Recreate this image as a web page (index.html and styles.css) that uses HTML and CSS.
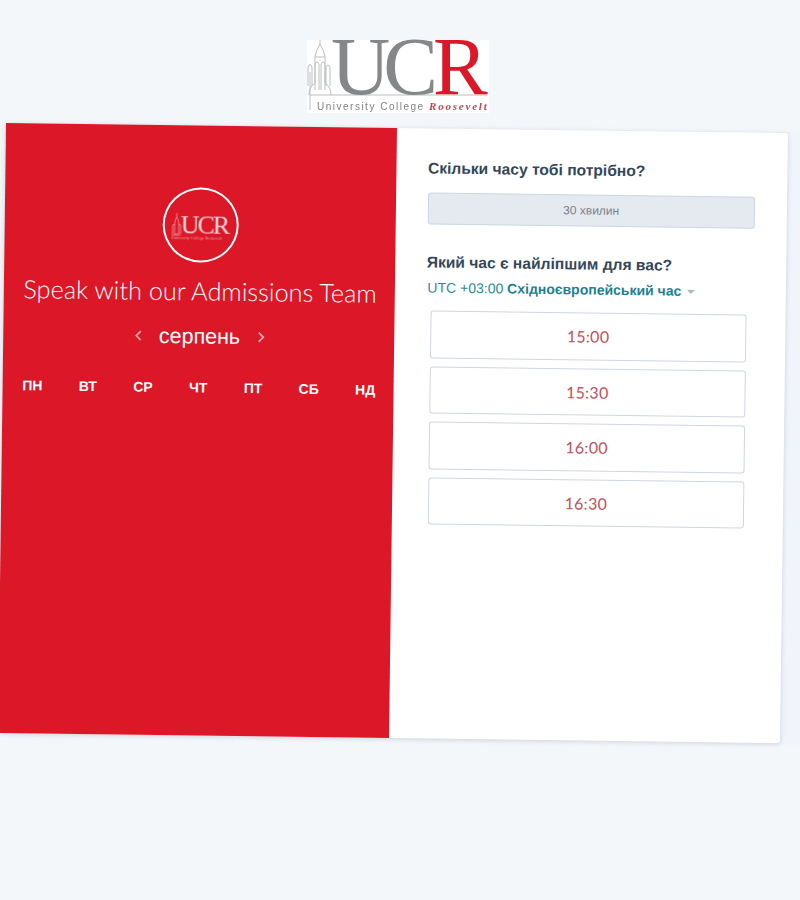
FILE: index.html
```html
<!DOCTYPE html>
<html lang="uk">
<head>
    <meta charset="UTF-8">
    <meta name="viewport" content="width=device-width, initial-scale=1.0">
    <title>Speak with our Admissions Team</title>
    <link rel="stylesheet" href="styles.css">
</head>
<body>
    <div class="logo-row">
        <svg class="logo" width="182" height="100" viewBox="0 -27 182 100">
            <rect width="182" height="73" fill="#fff"/>
            <g fill="none" stroke="#bcbec0" stroke-width="1">
                <path d="M3 70V32M13 4V0M13 4q-4 6-5 13v26M13 4q4 6 5 13v26M8 17h10"/>
                <path d="M1 46V27q2-5 4 0v19M8 50V24q2-4 4 0v26M14 50V24q2-4 4 0v26M19 46V27q2-4 4 0v19"/>
                <path d="M8 43q-6 4-6 12M18 43q6 4 6 12"/>
                <path d="M3 55H180"/>
            </g>
            <text class="logo-uc" x="24" y="54">UC</text>
            <text class="logo-r" x="126" y="54">R</text>
            <text class="logo-name" x="10" y="70">University College</text>
            <text class="logo-place" x="122" y="70">Roosevelt</text>
        </svg>
    </div>

    <div class="card">
        <div class="side">
            <div class="badge">
                <svg width="60" height="31" viewBox="0 -3 60 31">
                    <g fill="none" stroke="#f09ca4" stroke-width="0.8">
                        <path d="M6 1v4M6 5q-2 3-2 6v11h4V11q0-3-2-6M2 22v-9q1-2 2 0M8 13q1-2 2 0v9M1 23h9"/>
                    </g>
                    <text class="badge-text" x="10" y="21">UCR</text>
                    <text class="badge-sub" x="1" y="27">University College Roosevelt</text>
                </svg>
            </div>
            <h1>Speak with our Admissions Team</h1>
            <div class="month">
                <svg class="chev" width="8" height="12" viewBox="0 0 8 12"><path d="M6.500 1.500 2 6l4.500 4.500"/></svg>
                <span>серпень</span>
                <svg class="chev" width="8" height="12" viewBox="0 0 8 12"><path d="M1.500 1.500 6 6l-4.500 4.500"/></svg>
            </div>
            <div class="days">
                <span>ПН</span>
                <span>ВТ</span>
                <span>СР</span>
                <span>ЧТ</span>
                <span>ПТ</span>
                <span>СБ</span>
                <span>НД</span>
            </div>
        </div>
        <div class="main">
            <h2>Скільки часу тобі потрібно?</h2>
            <div class="duration">30 хвилин</div>
            <h2 class="when">Який час є найліпшим для вас?</h2>
            <div class="zone">UTC +03:00 <b>Східноєвропейський час</b><span class="caret"></span></div>
            <div class="slots">
                <button type="button">15:00</button>
                <button type="button">15:30</button>
                <button type="button">16:00</button>
                <button type="button">16:30</button>
            </div>
        </div>
    </div>
</body>
</html>
```

FILE: styles.css
```css
html, body {
    height: 100%;
}

body {
    margin: 0;
    overflow: hidden;
    font-family: "Liberation Sans", Arial, sans-serif;
    background: linear-gradient(#f1f4fb, #f1f4fb) right 132px / 20px 613px no-repeat, #f4f7fa;
}

.logo-row {
    display: flex;
    height: 128px;
    padding: 13px 0 0 307px;
    box-sizing: border-box;
}

.logo {
    display: block;
    flex: none;
    filter: blur(0.4px);
}

.logo text {
    font-family: "Liberation Serif", serif;
}

.logo .logo-uc {
    font-size: 82px;
    fill: #858789;
    letter-spacing: -7px;
}

.logo .logo-r {
    font-size: 82px;
    fill: #dc1727;
}

.logo .logo-name {
    font-family: "Liberation Sans", sans-serif;
    font-size: 10px;
    letter-spacing: 1.500px;
    fill: #808285;
}

.logo .logo-place {
    font-size: 11px;
    font-style: italic;
    font-weight: bold;
    letter-spacing: 1.800px;
    fill: #c8424e;
}

.card {
    display: flex;
    width: 782px;
    height: 610px;
    margin-left: 1.800px;
    background-color: #fff;
    border-radius: 3px;
    box-shadow: 0 1px 5px rgba(60, 80, 110, 0.22);
    transform: rotate(0.75deg);
}

.side {
    width: 388.500px;
    padding-left: 2px;
    flex: none;
    display: flex;
    flex-direction: column;
    align-items: center;
    background-color: #dc1727;
    color: #fff;
}

.badge {
    width: 72px;
    height: 71px;
    margin-top: 62px;
    border: 2.500px solid #fff;
    border-radius: 50%;
    display: flex;
    align-items: center;
    justify-content: center;
}

.badge svg {
    display: block;
    filter: blur(0.3px);
}

.badge-text {
    font-family: "Liberation Serif", serif;
    font-size: 26px;
    letter-spacing: -2px;
    fill: #f8d5d8;
}

.badge-sub {
    font-family: "Liberation Serif", serif;
    font-size: 3.600px;
    letter-spacing: 0.3px;
    fill: #f4b3b9;
}

h1 {
    margin: 12px 0 0;
    font-family: Lato, sans-serif;
    font-size: 25.300px;
    font-weight: 300;
    line-height: 32px;
    white-space: nowrap;
    color: #fff;
}

.month {
    display: flex;
    align-items: center;
    gap: 17px;
    margin-top: 16px;
    font-size: 21.500px;
    line-height: 28px;
}

.chev {
    fill: none;
    stroke: #f3a0a8;
    stroke-width: 1.800;
}

.days {
    display: flex;
    justify-content: space-between;
    width: 353px;
    margin-top: 28px;
    font-size: 14px;
    font-weight: bold;
    line-height: 18px;
}

.main {
    flex: 1;
    padding: 30px 32px 0 32px;
    color: #33475b;
}

h2 {
    margin: 0;
    font-size: 15.600px;
    font-weight: bold;
    line-height: 20px;
    color: #33475b;
}

.duration {
    height: 30px;
    margin-top: 14px;
    line-height: 30px;
    font-size: 12px;
    text-align: center;
    color: #77818c;
    background-color: #e5e9f0;
    border: 1px solid #cbd6e2;
    border-radius: 3px;
}

.when {
    margin-top: 28px;
}

.zone {
    margin-top: 6px;
    padding-left: 1px;
    font-size: 14px;
    line-height: 18px;
    color: #2b8a9e;
}

.zone b {
    color: #1f7f93;
}

.caret {
    display: inline-block;
    margin-left: 6px;
    vertical-align: middle;
    border-left: 4px solid transparent;
    border-right: 4px solid transparent;
    border-top: 4px solid #a9b9c9;
}

.slots {
    display: flex;
    flex-direction: column;
    gap: 8px;
    margin-top: 14px;
    padding: 0 7px 0 4px;
}

.slots button {
    height: 47.500px;
    padding: 0;
    background-color: #fff;
    border: 1px solid #cfd6df;
    border-radius: 3px;
    font-family: Lato, sans-serif;
    font-size: 16px;
    letter-spacing: 0.3px;
    color: #bf5160;
}
```
